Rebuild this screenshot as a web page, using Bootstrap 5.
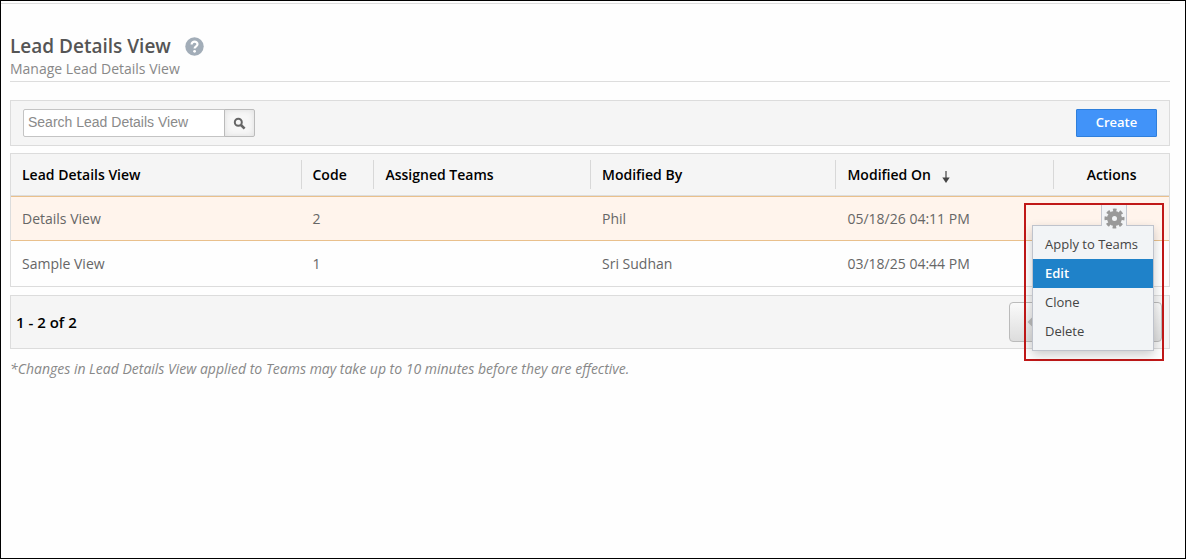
<!DOCTYPE html>
<html lang="en">
<head>
<meta charset="utf-8">
<meta name="viewport" content="width=device-width, initial-scale=1">
<title>Lead Details View</title>
<link href="https://cdn.jsdelivr.net/npm/bootstrap@5.3.0/dist/css/bootstrap.min.css" rel="stylesheet">
<style>
  body { font-family: "Open Sans", "Noto Sans", sans-serif; font-size: 14px; line-height: 20px; color: #666; background: #fefefe; }
  .page-frame { border: 1px solid #000; padding: 2px 15px 0 9px; }
  .top-rule { border-top: 1px solid #ddd; margin-left: -9px; height: 30px; }
  .page-title { font-size: 19px; line-height: 26px; font-weight: 600; color: #555; }
  .page-sub { color: #888; border-bottom: 1px solid #ddd; padding-bottom: 2px; margin-bottom: 18px; }
  .help-link { margin-left: 14px; }
  .panel { background: #f5f5f5; border: 1px solid #dcdcdc; }
  .toolbar { height: 46px; padding: 0 12px; margin-bottom: 7px; }
  .search-box { width: 232px; height: 28px; }
  .search-box .form-control { font-family: "Liberation Sans", Arial, sans-serif; font-size: 14px; line-height: 18px; padding: 0 5px 2px 4px; border-color: #c4c4c4; border-radius: 2px; color: #555; }
  .search-box .form-control::placeholder { color: #8a8a8a; }
  .search-box .btn { width: 31px; padding: 0; border: 1px solid #bbb; border-radius: 0 2px 2px 0; background: #f7f7f7; box-shadow: inset 0 0 6px #ddd; }
  .btn-create { width: 81px; height: 28px; padding: 0 0 2px; font-size: 13px; line-height: 20px; font-weight: 600; color: #fff; background: #4193f9; border: 1px solid #2f7fdb; border-radius: 1px; }
  .views { table-layout: fixed; border-collapse: separate; border-spacing: 0; border: 1px solid #dcdcdc; margin-bottom: 8px; width: 100%; }
  .views th { background: #f5f5f5; font-weight: 600; color: #000; padding: 6px 0; border-bottom: 1px solid #ddd; }
  .head-cell { height: 29px; line-height: 29px; padding-left: 11px; border-left: 1px solid #d8d8d8; white-space: nowrap; }
  th:first-child .head-cell { border-left: 0; }
  .views td { height: 45px; padding: 0 12px; vertical-align: middle; }
  .views td:first-child { padding-left: 11px; }
  .row-active td { background: #fff4ec; border-top: 1px solid #e9c08c; border-bottom: 1px solid #e9c08c; }
  .pager { height: 54px; padding: 0 7px 0 5px; font-size: 15px; font-weight: 600; color: #000; margin-bottom: 10px; }
  .pager .btn { width: 77px; height: 40px; border: 1px solid #bbb; border-radius: 4px; background: linear-gradient(#fafafa, #ddd); padding: 0 17px; display: flex; align-items: center; }
  .note { color: #888; font-style: italic; }
  .callout-box { top: 6px; right: 5px; width: 140px; height: 158px; border: 2px solid #c01818; padding: 0 8px 0 6px; z-index: 5; }
  .gear-tab { width: 26px; height: 21px; margin-right: 27px; background: #f2f4f6; border: 1px solid #c3c6cf; border-width: 0 1px; padding: 5px 0 0; position: relative; z-index: 1001; }
  .callout-box .dropdown-menu { width: 122px; min-width: 0; padding: 4px 0; margin-top: -1px; background: #f2f4f6; border: 1px solid #bfc3cc; border-radius: 0; box-shadow: 0 4px 10px #0003; font-size: 13px; }
  .callout-box .dropdown-item { font-weight: 500; padding: 4px 12px 5px; line-height: 20px; color: #444; }
  .callout-box .dropdown-item.active { background: #1f82c9; color: #fff; font-weight: 600; }
</style>
</head>
<body>
<main class="page-frame min-vh-100">
  <div class="top-rule"></div>
  <header>
    <div class="d-flex align-items-center">
      <h1 class="page-title mb-0">Lead Details View</h1>
      <a href="#" class="help-link d-flex" aria-label="Help">
        <svg width="19" height="19" viewBox="0 0 19 19"><circle cx="9.500" cy="9.500" r="9.200" fill="#a2adb8"/><path d="M6.600 7.400C6.600 3.700 12.600 3.800 12.500 7.300C12.400 9.300 9.600 9.300 9.600 11.600" fill="none" stroke="#fff" stroke-width="2.200"/><circle cx="9.600" cy="14.300" r="1.400" fill="#fff"/></svg>
      </a>
    </div>
    <p class="page-sub">Manage Lead Details View</p>
  </header>

  <div class="panel toolbar d-flex align-items-center justify-content-between">
    <form class="input-group search-box flex-nowrap" role="search">
      <input type="text" class="form-control" placeholder="Search Lead Details View" aria-label="Search Lead Details View">
      <button type="button" class="btn d-flex align-items-center justify-content-center" aria-label="Search">
        <svg width="13" height="13" viewBox="0 0 13 13" fill="none" stroke="#666"><circle cx="5.300" cy="5.200" r="3.500" stroke-width="2"/><path d="M8 8l3.600 3.600" stroke-width="2.600"/></svg>
      </button>
    </form>
    <button type="button" class="btn btn-create">Create</button>
  </div>

  <table class="views">
    <colgroup><col style="width:25%"><col style="width:6.300%"><col style="width:18.700%"><col style="width:21.200%"><col style="width:18.800%"><col style="width:10%"></colgroup>
    <thead>
      <tr>
        <th scope="col"><div class="head-cell">Lead Details View</div></th>
        <th scope="col"><div class="head-cell">Code</div></th>
        <th scope="col"><div class="head-cell">Assigned Teams</div></th>
        <th scope="col"><div class="head-cell">Modified By</div></th>
        <th scope="col"><div class="head-cell d-flex align-items-center">Modified On
          <svg class="ms-2 mt-1" width="14" height="14" viewBox="0 0 14 14"><path d="M7 1v8" stroke="#666" stroke-width="1.500"/><path d="M3.300 7.500h7.400L7 13z" fill="#444"/></svg></div></th>
        <th scope="col"><div class="head-cell text-center ps-0">Actions</div></th>
      </tr>
    </thead>
    <tbody>
      <tr class="row-active">
        <td>Details View</td><td>2</td><td></td><td>Phil</td><td>05/18/26 04:11 PM</td>
        <td class="position-relative">
          <div class="callout-box position-absolute d-flex flex-column">
            <button type="button" class="gear-tab align-self-end d-flex align-items-center justify-content-center" aria-label="Row actions" aria-expanded="true">
              <svg width="21" height="21" viewBox="0 0 21 21" class="flex-shrink-0"><g fill="none" stroke="#999"><circle cx="10.500" cy="10.500" r="5" stroke-width="5"/><circle cx="10.500" cy="10.500" r="8.300" stroke-width="3.400" stroke-dasharray="3.500 3.019" stroke-dashoffset="1.750"/></g></svg>
            </button>
            <div class="dropdown-menu show position-static">
              <button type="button" class="dropdown-item">Apply to Teams</button>
              <button type="button" class="dropdown-item active">Edit</button>
              <button type="button" class="dropdown-item">Clone</button>
              <button type="button" class="dropdown-item">Delete</button>
            </div>
          </div>
        </td>
      </tr>
      <tr>
        <td>Sample View</td><td>1</td><td></td><td>Sri Sudhan</td><td>03/18/25 04:44 PM</td><td></td>
      </tr>
    </tbody>
  </table>

  <div class="panel pager d-flex align-items-center justify-content-between">
    <span>1 - 2 of 2</span>
    <div class="btn-group">
      <button type="button" class="btn" aria-label="Previous page"><svg width="14" height="18" viewBox="0 0 14 18"><path d="M11 2L4 9l7 7" fill="none" stroke="#bbb" stroke-width="5"/></svg></button>
      <button type="button" class="btn justify-content-end" aria-label="Next page"></button>
    </div>
  </div>
  <p class="note mb-0">*Changes in Lead Details View applied to Teams may take up to 10 minutes before they are effective.</p>
</main>
<script src="https://cdn.jsdelivr.net/npm/bootstrap@5.3.0/dist/js/bootstrap.bundle.min.js"></script>
</body>
</html>
